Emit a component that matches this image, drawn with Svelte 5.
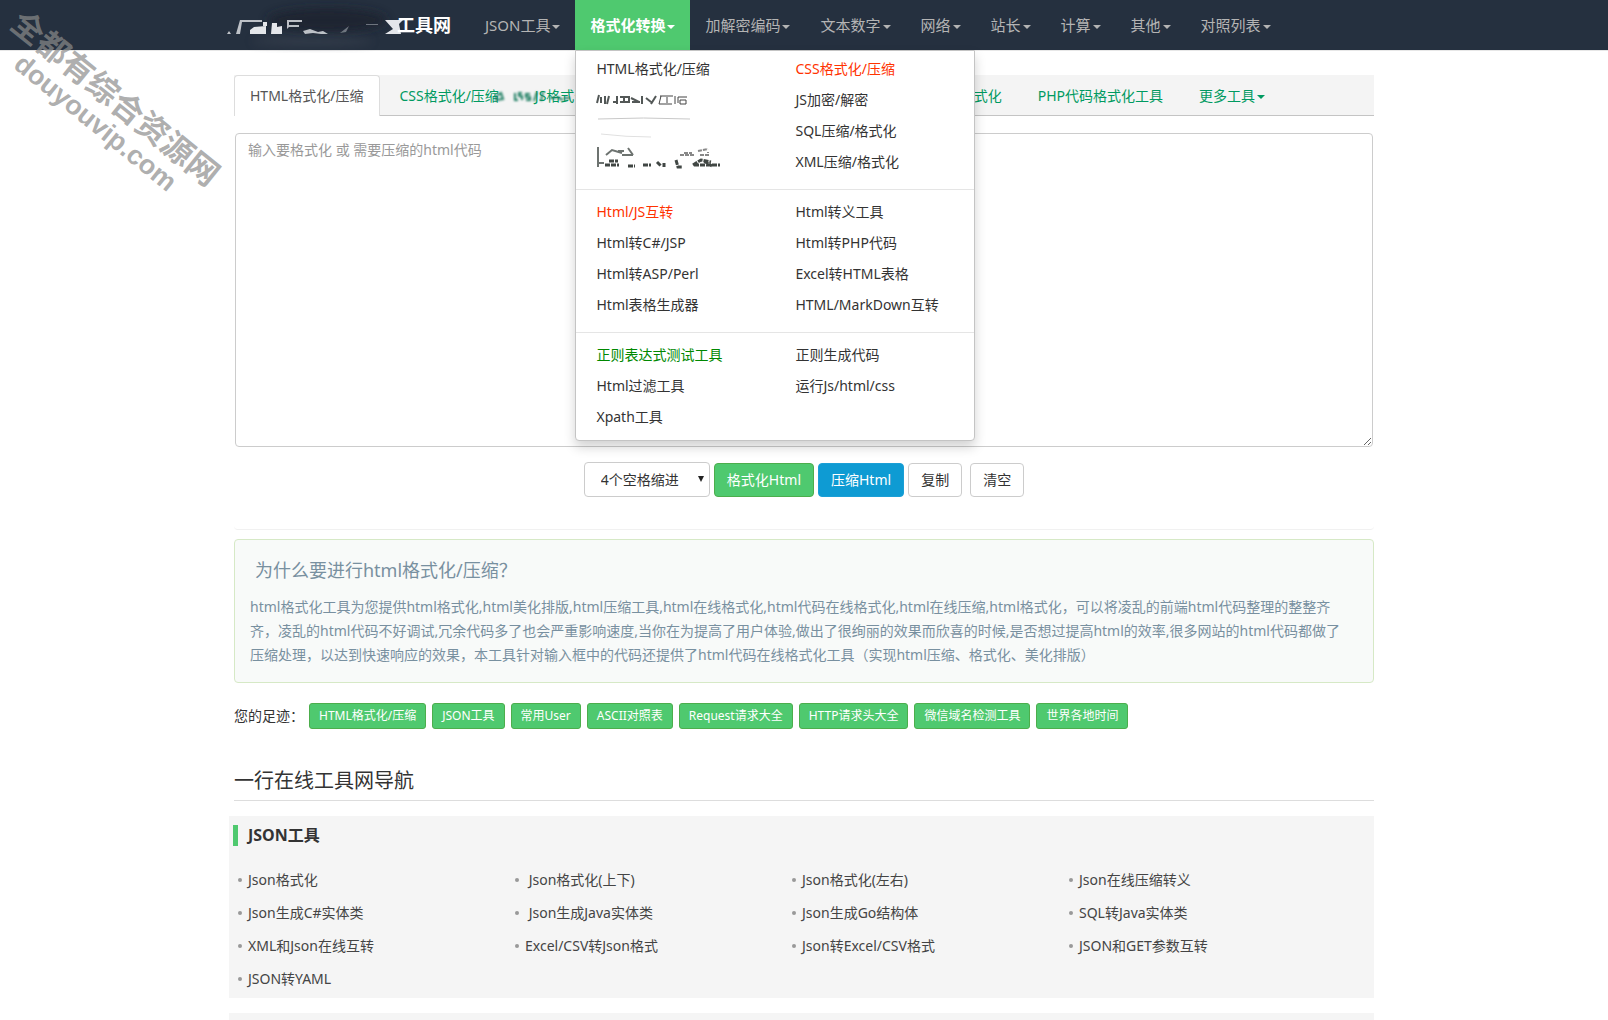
<script lang="ts">
	interface Link {
		label: string;
		tone?: "hot" | "good";
		smudge?: "row" | "blank" | "tail";
	}

	const navItems = ["JSON工具", "格式化转换", "加解密编码", "文本数字", "网络", "站长", "计算", "其他", "对照列表"];

	const menuGroups: Link[][] = [
		[
			{ label: "HTML格式化/压缩" },
			{ label: "CSS格式化/压缩", tone: "hot" },
			{ label: "", smudge: "row" },
			{ label: "JS加密/解密" },
			{ label: "", smudge: "blank" },
			{ label: "SQL压缩/格式化" },
			{ label: "", smudge: "tail" },
			{ label: "XML压缩/格式化" },
		],
		[
			{ label: "Html/JS互转", tone: "hot" },
			{ label: "Html转义工具" },
			{ label: "Html转C#/JSP" },
			{ label: "Html转PHP代码" },
			{ label: "Html转ASP/Perl" },
			{ label: "Excel转HTML表格" },
			{ label: "Html表格生成器" },
			{ label: "HTML/MarkDown互转" },
		],
		[
			{ label: "正则表达式测试工具", tone: "good" },
			{ label: "正则生成代码" },
			{ label: "Html过滤工具" },
			{ label: "运行Js/html/css" },
			{ label: "Xpath工具" },
		],
	];

	const footprints = [
		"HTML格式化/压缩",
		"JSON工具",
		"常用User",
		"ASCII对照表",
		"Request请求大全",
		"HTTP请求头大全",
		"微信域名检测工具",
		"世界各地时间",
	];

	const jsonTools = [
		"Json格式化",
		"\u00a0Json格式化(上下)",
		"Json格式化(左右)",
		"Json在线压缩转义",
		"Json生成C#实体类",
		"\u00a0Json生成Java实体类",
		"Json生成Go结构体",
		"SQL转Java实体类",
		"XML和Json在线互转",
		"Excel/CSV转Json格式",
		"Json转Excel/CSV格式",
		"JSON和GET参数互转",
		"JSON转YAML",
	];

	let activeNav = $state("格式化转换");
	let indent = $state("4");
	let source = $state("");

	function minify(): void {
		source = source.replace(/>\s+</g, "><").trim();
	}

	function format(): void {
		source = source.replace(/></g, ">\n<");
	}

	async function copy(): Promise<void> {
		await navigator.clipboard.writeText(source);
	}
</script>

<header class="navbar">
	<div class="container navbar-inner">
		<a class="brand" href="#home">
			<svg class="brand-smudge" viewBox="0 0 170 50" width="170" height="50" aria-hidden="true">
				<defs>
					<filter id="soft"><feGaussianBlur stdDeviation="0.7" /></filter>
					<filter id="haze" x="-20%" y="-100%" width="140%" height="300%"><feGaussianBlur stdDeviation="5" /></filter>
				</defs>
				<ellipse cx="100" cy="20" rx="60" ry="12" fill="#1d232d" opacity=".8" filter="url(#haze)" />
				<ellipse cx="85" cy="41" rx="60" ry="4" fill="#454c59" opacity=".5" filter="url(#haze)" />
				<g filter="url(#soft)" fill="#e4e6ea">
					<path d="M0 34l2-3 2 3zM9 34l4-14h22v2H15l-2 12z" opacity=".8" />
					<path d="M23 30l4-3 12-1v8H23zM45 23h5v4l5-1v8H44zM36 22h4v4h-4z" />
					<path d="M60 20h15v2H62v3h10v2H62l-2 2zM76 31l7-2 8 3 5-1 5 3h-7l-8-1-8 1z" opacity=".8" />
					<path d="M113 33l9-7-3 6zM139 24h12v1h-12z" opacity=".4" />
					<path d="M158 20h18l-4 4 2 10h-16l8-5z" />
				</g>
			</svg>
			<span class="brand-text">工具网</span>
		</a>
		<nav aria-label="主导航">
			<ul class="nav">
				{#each navItems as item}
					<li>
						<button type="button" class="nav-link" class:active={item === activeNav} onclick={() => (activeNav = item)}>
							{item}<span class="caret"></span>
						</button>
						{#if item === "格式化转换" && activeNav === item}
							<div class="menu">
								{#each menuGroups as group}
									<ul class="menu-group">
										{#each group as link}
											<li>
												{#if link.smudge}
													<svg class="menu-smudge" viewBox="0 0 130 31" width="130" height="31" aria-hidden="true">
														{#if link.smudge === "row"}
															<path d="M3 11l-2 8M5 13v6M9 12v8M13 12l-2 8M17 18h3M21 12v8M24 13h9v5h-9M28 12v7M35 14l8 4M36 18h8M46 12v8M50 14l5 4M60 12l-5 8" stroke="#353b39" stroke-width="2" fill="none" opacity=".85" />
															<path d="M64 12h13M65 12l-2 8h13M71 13v6M79 12v8M82 13h9M82 13v6M84 16h6v4h-6z" stroke="#444" fill="none" />
														{:else if link.smudge === "blank"}
															<path d="M2 4q45-2 92 0" stroke="#c8c8c8" fill="none" />
															<path d="M5 19q25 3 50 3" stroke="#e0e0e0" fill="none" />
														{:else}
															<path d="M2 1v20M2 17h6M10 9l6-5 10 3M32 2l5 7M26 9h11M22 5h6" stroke="#6d7370" stroke-width="2" fill="none" />
															<path d="M9 19h14M13 15h9M32 20h7M47 19h8M61 16l4 4M68 17v4M80 14l2 7h4M97 19l8-5 10 2M98 19h26M108 15l8 5" stroke="#414744" stroke-width="3" stroke-dasharray="5 1" fill="none" />
															<path d="M84 9h15M88 7h8M102 5l10-2M104 9h8v-3" stroke="#888" stroke-width="2" stroke-dasharray="4 1" fill="none" />
														{/if}
													</svg>
												{:else}
													<a href="#tool" class={link.tone ?? ""}>{link.label}</a>
												{/if}
											</li>
										{/each}
									</ul>
								{/each}
							</div>
						{/if}
					</li>
				{/each}
			</ul>
		</nav>
	</div>
</header>

<main class="container">
	<ul class="tabs">
		<li><a class="tab current" href="#html">HTML格式化/压缩</a></li>
		<li><a class="tab" href="#css">CSS格式化/压缩</a></li>
		<li class="smudged">
			<svg class="tab-smudge" viewBox="0 0 80 16" width="80" height="16" aria-hidden="true">
				<path d="M2 7l5-3 2 6-7 1zM21 4v7h3M28 4h-3v3h3v4M36 5h-4v3h4v3h-4M43 3l-3 9M49 3l-2 9M56 9h6M63 8l6 3M70 9h6" stroke="#1f7f63" stroke-width="2" fill="none" />
			</svg>
			<a class="tab" href="#js">JS格式化/压缩</a>
		</li>
		<li class="push"><a class="tab" href="#java">Java代码格式化</a></li>
		<li><a class="tab" href="#php">PHP代码格式化工具</a></li>
		<li><a class="tab" href="#more">更多工具<span class="caret"></span></a></li>
	</ul>

	<section class="editor">
		<textarea aria-label="html代码" placeholder="输入要格式化 或 需要压缩的html代码" bind:value={source}></textarea>
		<div class="actions">
			<span class="select-wrap">
				<select aria-label="缩进" bind:value={indent}>
					<option value="1">1个空格缩进</option>
					<option value="2">2个空格缩进</option>
					<option value="4">4个空格缩进</option>
				</select>
			</span>
			<button type="button" class="btn btn-green" onclick={format}>格式化Html</button>
			<button type="button" class="btn btn-blue" onclick={minify}>压缩Html</button>
			<button type="button" class="btn" onclick={copy}>复制</button>
			<button type="button" class="btn btn-clear" onclick={() => (source = "")}>清空</button>
		</div>
	</section>

	<section class="about">
		<h2>为什么要进行html格式化/压缩？</h2>
		<p>
			html格式化工具为您提供html格式化,html美化排版,html压缩工具,html在线格式化,html代码在线格式化,html在线压缩,html格式化，可以将凌乱的前端html代码整理的整整齐<br />齐，凌乱的html代码不好调试,冗余代码多了也会严重影响速度,当你在为提高了用户体验,做出了很绚丽的效果而欣喜的时候,是否想过提高html的效率,很多网站的html代码都做了<br />压缩处理，以达到快速响应的效果，本工具针对输入框中的代码还提供了html代码在线格式化工具（实现html压缩、格式化、美化排版）
		</p>
	</section>

	<div class="footprints">
		<span class="footprints-label">您的足迹：</span>
		{#each footprints as item}
			<a class="chip" href="#visited">{item}</a>
		{/each}
	</div>

	<h2 class="directory-title">一行在线工具网导航</h2>

	<section class="panel">
		<h3>JSON工具</h3>
		<ul class="tool-list">
			{#each jsonTools as tool}
				<li><a href="#tool">{tool}</a></li>
			{/each}
		</ul>
	</section>
	<section class="panel panel-next"></section>
</main>

<div class="watermark" aria-hidden="true">
	<div>全都有综合资源网</div>
	<div class="watermark-url">douyouvip.com</div>
</div>

<style>
	:global(body) {
		margin: 0;
		background: #fff;
		color: #333;
		font: 14px/20px "Noto Sans", "Noto Sans CJK SC", sans-serif;
	}

	ul {
		list-style: none;
		margin: 0;
		padding: 0;
	}

	a {
		color: inherit;
		text-decoration: none;
	}

	button,
	select,
	textarea {
		font: inherit;
		color: inherit;
	}

	.container {
		box-sizing: border-box;
		max-width: 1170px;
		margin: 0 auto;
		padding: 0 15px;
	}

	.navbar {
		background: #25303f;
		border-bottom: 1px solid #e7e7e7;
	}

	.navbar-inner {
		display: flex;
		height: 50px;
		padding-left: 0;
	}

	.brand {
		display: flex;
		flex: none;
		align-items: center;
		justify-content: flex-end;
		width: 232px;
		margin-right: 19px;
		color: #fff;
		font-size: 18px;
		font-weight: 700;
		white-space: nowrap;
	}

	.brand-smudge {
		flex: none;
		overflow: visible;
	}

	.nav {
		display: flex;
	}

	.nav li {
		position: relative;
	}

	.nav-link {
		height: 50px;
		padding: 0 15px;
		border: 0;
		background: none;
		color: #b4b4b4;
		font-size: 15px;
		white-space: nowrap;
		cursor: pointer;
	}

	.nav-link.active {
		background: #4fc96f;
		color: #fff;
		font-weight: 700;
	}

	.caret {
		display: inline-block;
		margin-left: 2px;
		vertical-align: middle;
		border-top: 4px solid;
		border-left: 4px solid transparent;
		border-right: 4px solid transparent;
	}

	.menu {
		position: absolute;
		top: 50px;
		left: 0;
		z-index: 10;
		box-sizing: border-box;
		width: 400px;
		border: 1px solid #c4c4c4;
		border-radius: 0 0 4px 4px;
		background: #fff;
		box-shadow: 0 6px 12px rgba(0, 0, 0, 0.18);
	}

	.menu-group {
		display: grid;
		grid-template-columns: 1fr 1fr;
		padding: 6px 0 12px;
		line-height: 31px;
	}

	.menu-group:first-child {
		padding-top: 2px;
	}

	.menu-group:last-child {
		padding-bottom: 8px;
	}

	.menu-group + .menu-group {
		border-top: 1px solid #e5e5e5;
	}

	.menu-group li {
		height: 31px;
		padding-left: 20px;
		white-space: nowrap;
	}

	.menu-smudge {
		display: block;
		filter: blur(0.6px);
	}

	.hot {
		color: #ff3300;
	}

	.good {
		color: #008800;
	}

	.tabs {
		display: flex;
		margin-top: 24px;
		padding-right: 90px;
		height: 40px;
		background: #f4f4f4;
		border-bottom: 1px solid #c4c4c4;
		color: #009a61;
	}

	.push {
		margin-left: auto;
	}

	.smudged {
		position: relative;
	}

	.tab-smudge {
		position: absolute;
		top: 14px;
		left: -24px;
		filter: blur(1px);
		pointer-events: none;
	}

	.tab {
		display: block;
		box-sizing: border-box;
		height: 41px;
		margin-right: 2px;
		padding: 10px 16px;
		border: 1px solid transparent;
		border-bottom: 0;
		line-height: 20px;
		white-space: nowrap;
	}

	.tab.current {
		padding-left: 15px;
		border-color: #ddd;
		border-radius: 4px 4px 0 0;
		background: #fff;
		color: #555;
	}

	.editor {
		padding: 17px 1px 32px;
		border-bottom: 1px solid #f1f1f1;
		border-radius: 0 0 4px 4px;
	}

	textarea {
		display: block;
		box-sizing: border-box;
		width: 100%;
		height: 314px;
		padding: 6px 12px;
		border: 1px solid #ccc;
		border-radius: 4px;
		background: #fff;
	}

	textarea::placeholder {
		color: #999;
	}

	.actions {
		display: flex;
		align-items: flex-end;
		justify-content: center;
		gap: 4px;
		margin-top: 15px;
	}

	.select-wrap {
		position: relative;
	}

	.select-wrap::after {
		content: "";
		position: absolute;
		top: 14px;
		right: 6px;
		border-top: 6px solid #222;
		border-left: 3px solid transparent;
		border-right: 3px solid transparent;
		pointer-events: none;
	}

	select {
		appearance: none;
		display: block;
		box-sizing: border-box;
		width: 126px;
		height: 35px;
		padding: 0 16px;
		border: 1px solid #ccc;
		border-radius: 4px;
		background: #fff;
	}

	.btn {
		height: 34px;
		padding: 0 12px;
		border: 1px solid #ccc;
		border-radius: 4px;
		background: #fff;
		cursor: pointer;
	}

	.btn-green {
		border-color: #4cae4c;
		background: #4fc96f;
		color: #fff;
	}

	.btn-blue {
		border-color: #1b9fd6;
		background: #0e9bd3;
		color: #fff;
	}

	.btn-clear {
		margin-left: 4px;
	}

	.about {
		margin-top: 9px;
		padding: 15px;
		border: 1px solid #d6e9c6;
		border-radius: 4px;
		background: #f8faf9;
		color: #7890a0;
	}

	.about h2 {
		margin: 0 5px 10px;
		font-size: 18px;
		font-weight: 400;
		line-height: 30px;
	}

	.about p {
		margin: 0;
		line-height: 24px;
		white-space: nowrap;
	}

	.footprints {
		display: flex;
		align-items: center;
		gap: 6px;
		margin-top: 20px;
	}

	.footprints-label {
		width: 69px;
		white-space: nowrap;
	}

	.chip {
		padding: 3px 9px;
		border: 1px solid #4cae4c;
		border-radius: 3px;
		background: #4fc96f;
		color: #fff;
		font-size: 12px;
		line-height: 18px;
		white-space: nowrap;
	}

	.directory-title {
		margin: 35px 0 15px;
		padding-bottom: 3px;
		border-bottom: 1px solid #ddd;
		font-size: 20px;
		font-weight: 400;
		line-height: 33px;
	}

	.panel {
		margin-left: -5px;
		padding: 9px 0 3px 4px;
		background: #f5f5f5;
	}

	.panel h3 {
		margin: 0 0 17px;
		padding-left: 10px;
		border-left: 5px solid #4fc96f;
		font-size: 16px;
		font-weight: 700;
		line-height: 21px;
	}

	.tool-list {
		display: grid;
		grid-template-columns: repeat(4, 277px);
		padding-left: 5px;
		color: #444;
		line-height: 33px;
	}

	.tool-list li {
		display: flex;
		align-items: center;
		gap: 6px;
	}

	.tool-list li::before {
		content: "";
		width: 4px;
		height: 4px;
		border-radius: 50%;
		background: #999;
	}

	.panel-next {
		margin-top: 15px;
		padding: 7px 0 0;
	}

	.watermark {
		position: absolute;
		top: 2px;
		left: 29px;
		z-index: 20;
		transform: rotate(39deg);
		transform-origin: 0 0;
		color: rgba(140, 140, 140, 0.7);
		font: 700 32px/36px "Noto Sans CJK SC", sans-serif;
		white-space: nowrap;
		pointer-events: none;
	}

	.watermark-url {
		padding-left: 28px;
		font-family: "Liberation Sans", sans-serif;
		font-size: 27px;
		line-height: 32px;
	}
</style>
